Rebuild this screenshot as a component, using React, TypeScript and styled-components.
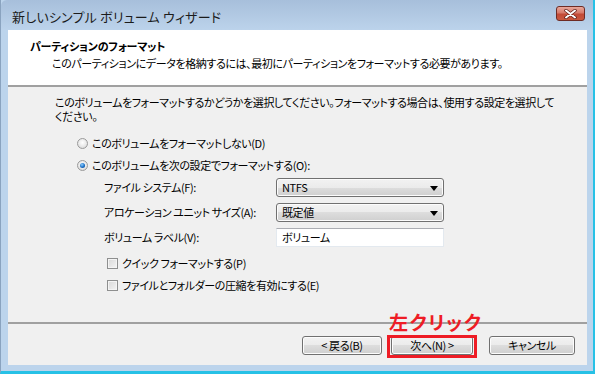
import styled, { createGlobalStyle } from "styled-components";

const GlobalStyle = createGlobalStyle`
  html, body {
    margin: 0;
    padding: 0;
    width: 595px;
    height: 374px;
    overflow: hidden;
  }
  body {
    font-family: "Noto Sans CJK JP", "Noto Sans", sans-serif;
    font-feature-settings: "palt";
    font-size: 11px;
    letter-spacing: -0.4px;
    color: #000000;
  }
`;

const Window = styled.div`
  position: relative;
  width: 595px;
  height: 374px;
  box-sizing: border-box;
  background: #bcd4ec;
  border-left: 1px solid #8aa3bf;
  border-right: 2px solid #27c1e6;
  border-bottom: 3px solid #27c1e6;
  display: flex;
  flex-direction: column;
`;

const TitleBar = styled.div`
  height: 30px;
  flex: none;
  display: flex;
  align-items: center;
  justify-content: space-between;
  padding: 0 8px 0 11px;
  background: linear-gradient(#a7bfdb, #bcd3eb);
  border-top-left-radius: 6px;
`;

const TitleText = styled.div`
  font-size: 13px;
  letter-spacing: 0.2px;
  color: #1b1b1b;
  padding-top: 2px;
`;

const CloseButton = styled.div`
  width: 29px;
  height: 15px;
  margin-top: -3px;
  box-sizing: border-box;
  border: 1px solid #6e2c25;
  border-radius: 3px;
  background: linear-gradient(#e8a89c 0%, #d77a6a 45%, #c24a36 55%, #c9583f 100%);
  display: flex;
  align-items: center;
  justify-content: center;
`;

const Client = styled.div`
  flex: 1;
  margin: 0 6px 6px 7px;
  background: #f0f0f0;
  display: flex;
  flex-direction: column;
`;

const Header = styled.div`
  height: 57px;
  flex: none;
  background: #ffffff;
  border-bottom: 2px solid #a0a0a0;
  box-sizing: border-box;
  padding: 8px 0 0 22px;
`;

const HeaderTitle = styled.div`
  font-weight: bold;
  font-size: 11px;
  letter-spacing: -0.2px;
  line-height: 16px;
`;

const HeaderSub = styled.div`
  line-height: 16px;
  padding-left: 22px;
  margin-top: 1px;
`;

const Body = styled.div`
  flex: 1;
  padding: 8px 0 0 47px;
  display: flex;
  flex-direction: column;
`;

const Intro = styled.div`
  line-height: 14px;
  white-space: nowrap;
`;

const OptionRow = styled.div<{ $top: number; $indent?: number }>`
  display: flex;
  align-items: center;
  gap: 4px;
  height: 16px;
  white-space: nowrap;
  margin-top: ${(p) => p.$top}px;
  padding-left: ${(p) => p.$indent ?? 0}px;
`;

const Radio = styled.span<{ $checked?: boolean }>`
  width: 11px;
  height: 11px;
  flex: none;
  border-radius: 50%;
  box-sizing: border-box;
  border: 1px solid #9a9a9a;
  background: radial-gradient(circle at 50% 40%, #ffffff 0%, #e6e6e6 60%, #cfcfcf 100%);
  position: relative;
  &::after {
    content: "";
    display: ${(p) => (p.$checked ? "block" : "none")};
    position: absolute;
    left: 2px;
    top: 2px;
    width: 5px;
    height: 5px;
    border-radius: 50%;
    background: radial-gradient(circle at 40% 35%, #8fd0ff 0%, #1a6fc7 55%, #0d3f7a 100%);
  }
`;

const Check = styled.span`
  width: 11px;
  height: 11px;
  flex: none;
  box-sizing: border-box;
  border: 1px solid #8e8f8f;
  background: linear-gradient(135deg, #d8d8d8, #f4f4f4);
  box-shadow: inset 0 0 0 1px #f4f4f4;
`;

const FieldGrid = styled.div`
  display: grid;
  grid-template-columns: 172px 168px;
  row-gap: 6px;
  padding-left: 49px;
  margin-top: 5px;
  align-items: center;
`;

const FieldLabel = styled.div`
  line-height: 19px;
  white-space: nowrap;
`;

const Select = styled.div`
  height: 19px;
  box-sizing: border-box;
  border: 1px solid #707070;
  border-radius: 3px;
  background: linear-gradient(#f2f2f2 0%, #ebebeb 50%, #dddddd 50%, #cfcfcf 100%);
  box-shadow: inset 0 0 0 1px #fcfcfc;
  display: flex;
  align-items: center;
  justify-content: space-between;
  padding: 0 5px 0 5px;
  line-height: 17px;
`;

const Arrow = styled.span`
  width: 0;
  height: 0;
  border-left: 4px solid transparent;
  border-right: 4px solid transparent;
  border-top: 5px solid #000000;
  margin-top: 1px;
`;

const TextBox = styled.div`
  height: 19px;
  box-sizing: border-box;
  border: 1px solid #e3e9ef;
  border-top-color: #abadb3;
  background: #ffffff;
  padding-left: 5px;
  line-height: 17px;
`;

const Footer = styled.div`
  height: 43px;
  flex: none;
  border-top: 2px solid #a0a0a0;
  box-sizing: border-box;
  display: flex;
  justify-content: flex-end;
  align-items: flex-start;
  padding: 12px 12px 0 0;
  position: relative;
`;

const Button = styled.div<{ $w: number; $gap?: number }>`
  width: ${(p) => p.$w}px;
  margin-left: ${(p) => p.$gap ?? 0}px;
  height: 19px;
  box-sizing: border-box;
  border: 1px solid #707070;
  border-radius: 3px;
  background: linear-gradient(#f2f2f2 0%, #ebebeb 50%, #dddddd 50%, #cfcfcf 100%);
  box-shadow: inset 0 0 0 1px #fcfcfc;
  display: flex;
  align-items: center;
  justify-content: center;
  line-height: 17px;
  position: relative;
`;

const Highlight = styled.div`
  position: absolute;
  left: -5px;
  top: -2px;
  right: -5px;
  bottom: -4px;
  border: 3px solid #ee1c25;
`;

const Callout = styled.div`
  position: absolute;
  left: 381px;
  top: -13px;
  font-size: 19px;
  font-weight: bold;
  color: #ee1c25;
  letter-spacing: 1.6px;
  line-height: 21px;
`;

function CloseGlyph() {
  return (
    <svg width="13" height="10" viewBox="0 0 13 10">
      <path
        d="M2 1.5 L11 8.5 M11 1.5 L2 8.5"
        stroke="#5a1a14"
        strokeWidth="3.4"
        strokeLinecap="round"
      />
      <path
        d="M2 1.5 L11 8.5 M11 1.5 L2 8.5"
        stroke="#ffffff"
        strokeWidth="2"
        strokeLinecap="round"
      />
    </svg>
  );
}

export default function App() {
  return (
    <>
      <GlobalStyle />
      <Window>
        <TitleBar>
          <TitleText>新しいシンプル ボリューム ウィザード</TitleText>
          <CloseButton>
            <CloseGlyph />
          </CloseButton>
        </TitleBar>
        <Client>
          <Header>
            <HeaderTitle>パーティションのフォーマット</HeaderTitle>
            <HeaderSub>
              このパーティションにデータを格納するには、最初にパーティションをフォーマットする必要があります。
            </HeaderSub>
          </Header>
          <Body>
            <Intro>
              このボリュームをフォーマットするかどうかを選択してください。フォーマットする場合は、使用する設定を選択して
              <br />
              ください。
            </Intro>
            <OptionRow $top={12} $indent={22}>
              <Radio />
              <span>このボリュームをフォーマットしない(D)</span>
            </OptionRow>
            <OptionRow $top={6} $indent={22}>
              <Radio $checked />
              <span>このボリュームを次の設定でフォーマットする(O):</span>
            </OptionRow>
            <FieldGrid>
              <FieldLabel>ファイル システム(F):</FieldLabel>
              <Select>
                <span>NTFS</span>
                <Arrow />
              </Select>
              <FieldLabel>アロケーション ユニット サイズ(A):</FieldLabel>
              <Select>
                <span>既定値</span>
                <Arrow />
              </Select>
              <FieldLabel>ボリューム ラベル(V):</FieldLabel>
              <TextBox>ボリューム</TextBox>
            </FieldGrid>
            <OptionRow $top={8} $indent={52}>
              <Check />
              <span>クイック フォーマットする(P)</span>
            </OptionRow>
            <OptionRow $top={6} $indent={52}>
              <Check />
              <span>ファイルとフォルダーの圧縮を有効にする(E)</span>
            </OptionRow>
          </Body>
          <Footer>
            <Callout>左クリック</Callout>
            <Button $w={80}>&lt; 戻る(B)</Button>
            <Button $w={82} $gap={9}>
              次へ(N) &gt;
              <Highlight />
            </Button>
            <Button $w={86} $gap={16}>キャンセル</Button>
          </Footer>
        </Client>
      </Window>
    </>
  );
}
